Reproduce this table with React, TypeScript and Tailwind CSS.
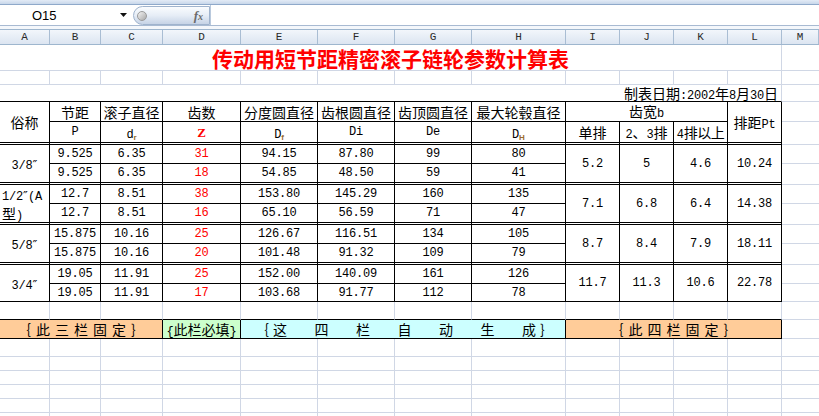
import type { ReactNode } from "react";

const G = "border-[#d0d7e5]";
const CJK = "font-['Noto_Sans_CJK_SC',sans-serif] text-[14px] leading-none";
const NUM = "font-['Liberation_Mono','DejaVu_Sans_Mono',monospace] text-[12px] tracking-[-0.2px] leading-none";
const COLS =
  "grid grid-cols-[50px_51px_62px_78px_77px_77px_77px_94px_54px_54px_54px_54px_37px]";
const ROWS =
  "grid-rows-[26px_14px_17px_20px_23px_19px_21px_19px_21px_19px_21px_19px_18px_18px_19px_18px_14px_14px_14px_14px_14px]";
const LETTERS = ["A", "B", "C", "D", "E", "F", "G", "H", "I", "J", "K", "L", "M"];

function Inch() {
  return <span className="font-['DejaVu_Sans',sans-serif] text-[13px] leading-none">″</span>;
}

// mixed CJK / latin text sharing one baseline
function T({ children, className = "" }: { children: ReactNode; className?: string }) {
  return <span className={`whitespace-nowrap leading-none ${className}`}>{children}</span>;
}

const groups = [
  {
    label: (
      <T>
        <span className={NUM}>3/8</span>
        <Inch />
      </T>
    ),
    rows: [
      ["9.525", "6.35", "31", "94.15", "87.80", "99", "80"],
      ["9.525", "6.35", "18", "54.85", "48.50", "59", "41"],
    ],
    b: ["5.2", "5", "4.6", "10.24"],
  },
  {
    label: (
      <div className="flex w-full flex-col items-start pl-[2px]">
        <div className="flex h-[20px] items-center">
          <T>
            <span className={NUM}>1/2</span>
            <Inch />
            <span className={NUM}>(A</span>
          </T>
        </div>
        <div className="flex h-[18px] items-center">
          <T>
            <span className={CJK}>型</span>
            <span className={NUM}>)</span>
          </T>
        </div>
      </div>
    ),
    rows: [
      ["12.7", "8.51", "38", "153.80", "145.29", "160", "135"],
      ["12.7", "8.51", "16", "65.10", "56.59", "71", "47"],
    ],
    b: ["7.1", "6.8", "6.4", "14.38"],
  },
  {
    label: (
      <T>
        <span className={NUM}>5/8</span>
        <Inch />
      </T>
    ),
    rows: [
      ["15.875", "10.16", "25", "126.67", "116.51", "134", "105"],
      ["15.875", "10.16", "20", "101.48", "91.32", "109", "79"],
    ],
    b: ["8.7", "8.4", "7.9", "18.11"],
  },
  {
    label: (
      <T>
        <span className={NUM}>3/4</span>
        <Inch />
      </T>
    ),
    rows: [
      ["19.05", "11.91", "25", "152.00", "140.09", "161", "126"],
      ["19.05", "11.91", "17", "103.68", "91.77", "112", "78"],
    ],
    b: ["11.7", "11.3", "10.6", "22.78"],
  },
];

function Cell({ className = "", children }: { className?: string; children?: ReactNode }) {
  return (
    <div className={`flex items-center justify-center text-black ${className}`}>
      {children}
    </div>
  );
}

function Sub({ children }: { children: ReactNode }) {
  return (
    <span className="relative top-[2px] font-['Liberation_Sans',sans-serif] text-[8px] font-bold leading-none text-[#9a6a2e]">
      {children}
    </span>
  );
}

function GridRow({ k, bottom = G }: { k: string; bottom?: string }) {
  return (
    <>
      {LETTERS.map((l, i) => (
        <div
          key={k + l}
          className={`border-b ${bottom} ${i < 12 ? "border-r border-r-[#d0d7e5]" : ""} ${
            i === 12 ? "border-b-[#d0d7e5]" : ""
          }`}
        />
      ))}
    </>
  );
}

function Spaced({ chars }: { chars: string[] }) {
  return (
    <div className="flex items-center gap-[5px]">
      {chars.map((c, i) => (
        <span key={i} className={CJK}>
          {c}
        </span>
      ))}
    </div>
  );
}

export default function App() {
  return (
    <div className="h-[416px] w-[819px] overflow-hidden bg-white">
      {/* ribbon edge + formula bar */}
      <div className="h-[5px] border-b border-[#8fa9ca] bg-gradient-to-b from-[#e3ebf6] to-[#c8d7ea]" />
      <div className="flex h-[21px] border-b border-[#a8bad2] bg-white">
        <div className="flex w-[133px] items-center">
          <span className="ml-[32px] font-['Liberation_Sans',sans-serif] text-[13px] leading-none text-black">
            O15
          </span>
          <svg className="ml-auto mr-[6px]" width="7" height="4" viewBox="0 0 7 4">
            <path d="M0 0h7L3.5 4z" fill="#111" />
          </svg>
        </div>
        <div className="mt-[1px] flex h-[19px] w-[77px] items-center rounded-l-full border border-[#9fb3cd] bg-gradient-to-b from-[#fafcfe] via-[#e6edf6] to-[#c6d3e6]">
          <span className="ml-[3px] h-[10px] w-[10px] rounded-full border border-[#9a9a9a] bg-gradient-to-br from-[#f4f4f4] to-[#a9a9a9]" />
          <span className="ml-auto mr-[6px] font-['Liberation_Serif',serif] text-[13px] font-bold italic leading-none text-[#6b6b6b]">
            f<span className="text-[10px]">x</span>
          </span>
        </div>
        <div className="flex-1 border-l border-[#b9c9dd]" />
      </div>
      <div className="h-[3px] bg-[#f4f7fb]" />

      {/* column letters */}
      <div
        className={`${COLS} h-[16px] border-y border-[#9eb6ce] bg-gradient-to-b from-[#f2f6fb] to-[#dce5f1]`}
      >
        {LETTERS.map((l) => (
          <div
            key={l}
            className="flex items-center justify-center border-r border-[#a9bdd3] font-['Liberation_Mono',monospace] text-[11px] leading-none text-[#2a2a2a]"
          >
            {l}
          </div>
        ))}
      </div>

      {/* sheet */}
      <div className={`${COLS} ${ROWS}`}>
        {/* title */}
        <Cell className={`col-span-12 border-r border-b ${G}`}>
          <span className="font-['Noto_Sans_CJK_SC',sans-serif] text-[21px] font-bold leading-[24px] text-[#ff0000]">
            传动用短节距精密滚子链轮参数计算表
          </span>
        </Cell>
        <div className={`border-b ${G}`} />

        <GridRow k="r2" />

        {/* date */}
        <Cell className="col-span-12 justify-end border-r border-b border-r-[#d0d7e5] border-b-black pr-[3px]">
          <T className="leading-[15px]">
            <span className={CJK}>制表日期</span>
            <span className={NUM}>:2002</span>
            <span className={CJK}>年</span>
            <span className={NUM}>8</span>
            <span className={CJK}>月</span>
            <span className={NUM}>30</span>
            <span className={CJK}>日</span>
          </T>
        </Cell>
        <div className={`border-b ${G}`} />

        {/* header row 1 */}
        <Cell className="row-span-2 border-r border-b-[3px] border-double border-black">
          <span className={CJK}>俗称</span>
        </Cell>
        {["节距", "滚子直径", "齿数", "分度圆直径", "齿根圆直径", "齿顶圆直径", "最大轮毂直径"].map((t) => (
          <Cell key={t} className="border-r border-b border-black">
            <span className={CJK}>{t}</span>
          </Cell>
        ))}
        <Cell className="col-span-3 border-r border-b border-black">
          <T>
            <span className={CJK}>齿宽</span>
            <span className={NUM}>b</span>
          </T>
        </Cell>
        <Cell className="row-span-2 border-r border-b-[3px] border-double border-black">
          <T>
            <span className={CJK}>排距</span>
            <span className={NUM}>Pt</span>
          </T>
        </Cell>
        <div className={`border-b ${G}`} />

        {/* header row 2 */}
        <Cell className="border-r border-b-[3px] border-double border-black">
          <span className={NUM}>P</span>
        </Cell>
        <Cell className="border-r border-b-[3px] border-double border-black">
          <T>
            <span className={NUM}>d</span>
            <Sub>r</Sub>
          </T>
        </Cell>
        <Cell className="border-r border-b-[3px] border-double border-black">
          <span className="font-['Liberation_Serif',serif] text-[13px] font-bold leading-none text-[#ff0000]">Z</span>
        </Cell>
        <Cell className="border-r border-b-[3px] border-double border-black">
          <T>
            <span className={NUM}>D</span>
            <Sub>f</Sub>
          </T>
        </Cell>
        <Cell className="border-r border-b-[3px] border-double border-black">
          <span className={NUM}>Di</span>
        </Cell>
        <Cell className="border-r border-b-[3px] border-double border-black">
          <span className={NUM}>De</span>
        </Cell>
        <Cell className="border-r border-b-[3px] border-double border-black">
          <T>
            <span className={NUM}>D</span>
            <Sub>H</Sub>
          </T>
        </Cell>
        <Cell className="border-r border-b-[3px] border-double border-black">
          <span className={CJK}>单排</span>
        </Cell>
        <Cell className="border-r border-b-[3px] border-double border-black">
          <T>
            <span className={NUM}>2</span>
            <span className={CJK}>、</span>
            <span className={NUM}>3</span>
            <span className={CJK}>排</span>
          </T>
        </Cell>
        <Cell className="border-r border-b-[3px] border-double border-black">
          <T>
            <span className={NUM}>4</span>
            <span className={`${CJK} tracking-[-0.5px]`}>排以上</span>
          </T>
        </Cell>
        <div className={`border-b ${G}`} />

        {/* data */}
        {groups.map((g, gi) => {
          const bot = gi === groups.length - 1 ? "border-b" : "border-b-[3px] border-double";
          return (
            <div key={gi} className="contents">
              <Cell className={`row-span-2 border-r border-black ${bot}`}>{g.label}</Cell>
              {g.rows[0].map((v, i) => (
                <Cell key={"a" + i} className="border-r border-b border-black">
                  <span className={`${NUM} ${i === 2 ? "text-[#ff0000]" : ""}`}>{v}</span>
                </Cell>
              ))}
              {g.b.map((v, i) => (
                <Cell key={"b" + i} className={`row-span-2 border-r border-black ${bot}`}>
                  <span className={NUM}>{v}</span>
                </Cell>
              ))}
              <div className={`border-b ${G}`} />
              {g.rows[1].map((v, i) => (
                <Cell key={"c" + i} className={`border-r border-black ${bot}`}>
                  <span className={`${NUM} ${i === 2 ? "text-[#ff0000]" : ""}`}>{v}</span>
                </Cell>
              ))}
              <div className={`border-b ${G}`} />
            </div>
          );
        })}

        <GridRow k="r14" bottom="border-black" />

        {/* legend row */}
        <Cell className="col-span-3 border-r border-b border-black bg-[#ffcc99]">
          <Spaced chars={["｛", "此", "三", "栏", "固", "定", "｝"]} />
        </Cell>
        <Cell className="border-r border-b border-black bg-[#ccffcc]">
          <T>
            <span className={NUM}>{"{"}</span>
            <span className={CJK}>此栏必填</span>
            <span className={NUM}>{"}"}</span>
          </T>
        </Cell>
        <Cell className="col-span-4 justify-start border-r border-b border-black bg-[#ccffff] pl-[14px] pr-[11px]">
          <span className={CJK}>｛</span>
          <div className="ml-[4px] flex flex-1 justify-between">
            {["这", "四", "栏", "自", "动", "生", "成"].map((c) => (
              <span key={c} className={CJK}>
                {c}
              </span>
            ))}
          </div>
          <span className={`${CJK} ml-[4px]`}>｝</span>
        </Cell>
        <Cell className="col-span-4 border-r border-b border-black bg-[#ffcc99]">
          <Spaced chars={["｛", "此", "四", "栏", "固", "定", "｝"]} />
        </Cell>
        <div className={`border-b ${G}`} />

        <GridRow k="r16" />
        <GridRow k="r17" />
        <GridRow k="r18" />
        <GridRow k="r19" />
        <GridRow k="r20" />
        <GridRow k="r21" />
      </div>
    </div>
  );
}
